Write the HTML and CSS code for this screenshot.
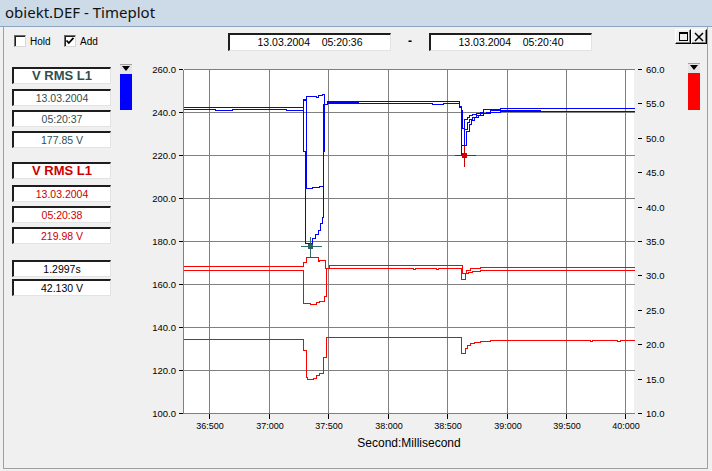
FILE: index.html
```html
<!DOCTYPE html>
<html>
<head>
<meta charset="utf-8">
<link rel="stylesheet" href="styles.css">
</head>
<body>
<div class="window">
  <div class="titlebar">obiekt.DEF - Timeplot</div>
  <div class="client">
    <div class="toolbar">
      <label class="check hold"><span class="box"></span>Hold</label>
      <label class="check add"><span class="box"><svg width="10" height="10" viewBox="0 0 10 10"><path d="M1.5 4.5 L3.8 7 L8.5 1.8" fill="none" stroke="#000" stroke-width="1.8"/></svg></span>Add</label>
      <div class="datebox first">13.03.2004    05:20:36</div>
      <span class="dash">-</span>
      <div class="datebox">13.03.2004    05:20:40</div>
      <div class="winbtns">
        <span class="wbtn"><svg width="9" height="9" viewBox="0 0 9 9"><rect x="0.5" y="0.5" width="8" height="8" fill="none" stroke="#000"/><rect x="0" y="0" width="9" height="2" fill="#000"/></svg></span>
        <span class="wbtn"><svg width="10" height="10" viewBox="0 0 10 10"><path d="M1 1 L9 9 M9 1 L1 9" stroke="#000" stroke-width="1.5"/></svg></span>
      </div>
    </div>
    <div class="main">
      <div class="panel">
        <div class="group blue">
          <div class="field title">V RMS L1</div>
          <div class="field">13.03.2004</div>
          <div class="field">05:20:37</div>
          <div class="field">177.85 V</div>
        </div>
        <div class="group red">
          <div class="field title">V RMS L1</div>
          <div class="field">13.03.2004</div>
          <div class="field">05:20:38</div>
          <div class="field">219.98 V</div>
        </div>
        <div class="group black">
          <div class="field">1.2997s</div>
          <div class="field">42.130 V</div>
        </div>
      </div>
      <div class="legend left">
        <div class="drop"><svg width="12" height="10" viewBox="0 0 12 10"><polygon points="2,2 10,2 6,7" fill="#000"/></svg></div>
        <div class="bar bluebar"></div>
      </div>
      <svg class="chart" width="548" height="412" viewBox="132 55 548 412">
        <rect x="183" y="69" width="451" height="344" fill="#fff"/>
        <g transform="translate(0.5,0.5)" shape-rendering="crispEdges" fill="none">
          <path stroke="#808080" d="M183 112H634 M183 155H634 M183 198H634 M183 241H634 M183 284H634 M183 327H634 M183 370H634 M209 69V413 M269 69V413 M328 69V413 M388 69V413 M447 69V413 M507 69V413 M566 69V413 M625 69V413 M183 69H634 M183 69V413 M183 413H634"/>
          <path stroke="#000" d="M178 69H182 M178 112H182 M178 155H182 M178 198H182 M178 241H182 M178 284H182 M178 327H182 M178 370H182 M178 413H182 M209 413V418 M269 413V418 M328 413V418 M388 413V418 M447 413V418 M507 413V418 M566 413V418 M625 413V418 M637 69H641 M637 103H641 M637 138H641 M637 172H641 M637 207H641 M637 241H641 M637 275H641 M637 310H641 M637 344H641 M637 379H641 M637 413H641"/>
          <path stroke="#ff0000" d="M183 266H303V262H306V257H318V261H319V260H325V268H329V265H462V273H466V270H470V268H480V267H634"/>
          <path stroke="#ff0000" d="M183 270H303V303H310V304H316V302H319V301H324V296H326V268H413V269H415V268H436V269H438V268H461V279H465V273H468V272H472V271H480V270H634"/>
          <path stroke="#ff0000" d="M183 339H303V350H306V377H307V379H313V378H316V375H319V373H323V357H326V337H461V353H465V348H467V345H470V343H474V342H480V341H490V340H590V341H592V340H617V341H620V340H634"/>
          <path stroke="#0000ff" d="M183 107H303V99H306V96H316V97H318V95H322V94H324V104H327V101H459V106H461V110H462V128H464V119H467V117H469V115H472V114H476V113H480V112H483V109H500V108H634"/>
          <path stroke="#0000ff" d="M183 109H215V110H232V109H286V110H303V100H306V188H312V187H319V186H323V104H327V103H432V104H443V103H459V107H461V145H464V129H467V122H469V119H472V117H476V115H480V113H486V112H490V110H540V111H634"/>
          <path stroke="#0000ff" d="M303 107V151H305V243H312V238H315V234H318V230H320V223H322V217H323V151H324V104H327V102H358V103 M459 106H461V155H464V145H466V131H469V124H471V120H474V117H478V115H483V113H490V112H500V111H634"/>
          <path stroke="#2f6f6f" d="M300 246H321 M310 236V256"/>
          <path stroke="#cc0000" d="M454 155H475 M464 145V166"/>
        </g>
        <rect x="308" y="244" width="5" height="5" fill="#2f5f5f"/>
        <rect x="462" y="153" width="5" height="5" fill="#cc0000"/>
        <g class="ylab" text-anchor="end">
          <text x="176" y="73">260.0</text>
          <text x="176" y="116">240.0</text>
          <text x="176" y="159">220.0</text>
          <text x="176" y="202">200.0</text>
          <text x="176" y="245">180.0</text>
          <text x="176" y="288">160.0</text>
          <text x="176" y="331">140.0</text>
          <text x="176" y="374">120.0</text>
          <text x="176" y="417">100.0</text>
        </g>
        <g class="ylab" text-anchor="start">
          <text x="646" y="73">60.0</text>
          <text x="646" y="107">55.0</text>
          <text x="646" y="142">50.0</text>
          <text x="646" y="176">45.0</text>
          <text x="646" y="211">40.0</text>
          <text x="646" y="245">35.0</text>
          <text x="646" y="279">30.0</text>
          <text x="646" y="314">25.0</text>
          <text x="646" y="348">20.0</text>
          <text x="646" y="383">15.0</text>
          <text x="646" y="417">10.0</text>
        </g>
        <g class="xlab" text-anchor="middle">
          <text x="210" y="428.5">36:500</text>
          <text x="270" y="428.5">37:000</text>
          <text x="329" y="428.5">37:500</text>
          <text x="389" y="428.5">38:000</text>
          <text x="448" y="428.5">38:500</text>
          <text x="508" y="428.5">39:000</text>
          <text x="567" y="428.5">39:500</text>
          <text x="626" y="428.5">40:000</text>
        </g>
        <text class="axtitle" x="409" y="447" text-anchor="middle">Second:Millisecond</text>
      </svg>
      <div class="legend right">
        <div class="drop"><svg width="12" height="10" viewBox="0 0 12 10"><polygon points="2,2 10,2 6,7" fill="#000"/></svg></div>
        <div class="bar redbar"></div>
      </div>
    </div>
  </div>
</div>
</body>
</html>
```
FILE: styles.css
```css
* { box-sizing: border-box; }
body { margin: 0; background: #f0f0f0; font-family: "Liberation Sans", Arial, sans-serif; color: #000; }
.window { width: 712px; height: 471px; background: #f0f0f0; overflow: hidden; }
.titlebar {
  height: 27px; background: #cddae8; border-bottom: 1px solid #8ea5bf;
  padding-left: 5px; font: 15px/25px "Noto Sans", sans-serif; color: #111;
}
.client {
  margin-left: 3px; width: 705px; height: 442px;
  border: 1px solid #a0a0a0; border-top: none;
}
.toolbar { display: flex; align-items: flex-start; height: 28px; padding-left: 10px; }
.check { display: flex; align-items: center; margin-top: 8px; font-size: 10px; height: 12px; }
.check.hold { width: 50px; }
.check.add { width: 40px; }
.box {
  width: 12px; height: 12px; background: #fff; margin-right: 4px;
  border: 1px solid; border-color: #6a6a6a #d8d8d8 #d8d8d8 #6a6a6a;
  box-shadow: inset 1px 1px 0 #202020;
  display: flex; align-items: center; justify-content: center;
}
.datebox {
  width: 163px; height: 18px; margin-top: 6px; background: #fff;
  border-style: solid; border-width: 2px 1px 1px 2px;
  border-color: #1e1e1e #e3e3e3 #e3e3e3 #1e1e1e;
  font-size: 10.5px; line-height: 15px; text-align: center; white-space: pre;
}
.datebox.first { margin-left: 124px; }
.dash { width: 38px; text-align: center; margin-top: 7px; font-weight: bold; font-size: 12px; }
.winbtns { margin-left: auto; margin-top: 2px; display: flex; }
.wbtn {
  width: 16px; height: 15px; background: #f0f0f0;
  border: 1px solid; border-color: #fff #000 #000 #fff;
  box-shadow: inset -1px -1px 0 #808080;
  display: flex; align-items: center; justify-content: center;
}
.main { display: flex; align-items: flex-start; height: 413px; }
.panel { margin-left: 8px; width: 99px; padding-top: 12px; }
.field {
  height: 17px; background: #fff; margin-top: 4px;
  border-style: solid; border-width: 2px 1px 1px 2px;
  border-color: #1e1e1e #e3e3e3 #e3e3e3 #1e1e1e;
  font-size: 10.5px; line-height: 14px; text-align: center;
}
.field.title { font-size: 13px; font-weight: bold; margin-top: 0; }
.blue .field.title + .field { margin-top: 5px; }
.red .field.title + .field { margin-top: 6px; }
.group.blue { color: #2f4f4f; }
.group.red { color: #cc0000; margin-top: 14px; }
.group.black { margin-top: 16px; }
.group.black .field { margin-top: 2px; }
.group.black .field:first-child { margin-top: 0; }
.legend { width: 12px; }
.legend.left { margin-left: 9px; margin-top: 9px; }
.legend.right { margin-left: 8px; margin-top: 8px; }
.drop { height: 10px; background: #e4e4e4; border-top: 1px solid #a0a0a0; overflow: hidden; }
.drop svg { display: block; margin-top: -1px; }
.bar { height: 37px; }
.legend.left .bar { height: 36px; }
.bluebar { background: #0000ff; }
.redbar { background: #ff0000; }
.chart { display: block; flex: none; }
.ylab text { font-family: "Liberation Sans", Arial, sans-serif; font-size: 9.5px; fill: #000; }
.xlab text { font-family: "Liberation Sans", Arial, sans-serif; font-size: 9px; fill: #000; }
.axtitle { font-family: "Liberation Sans", Arial, sans-serif; font-size: 12px; fill: #000; }
```
